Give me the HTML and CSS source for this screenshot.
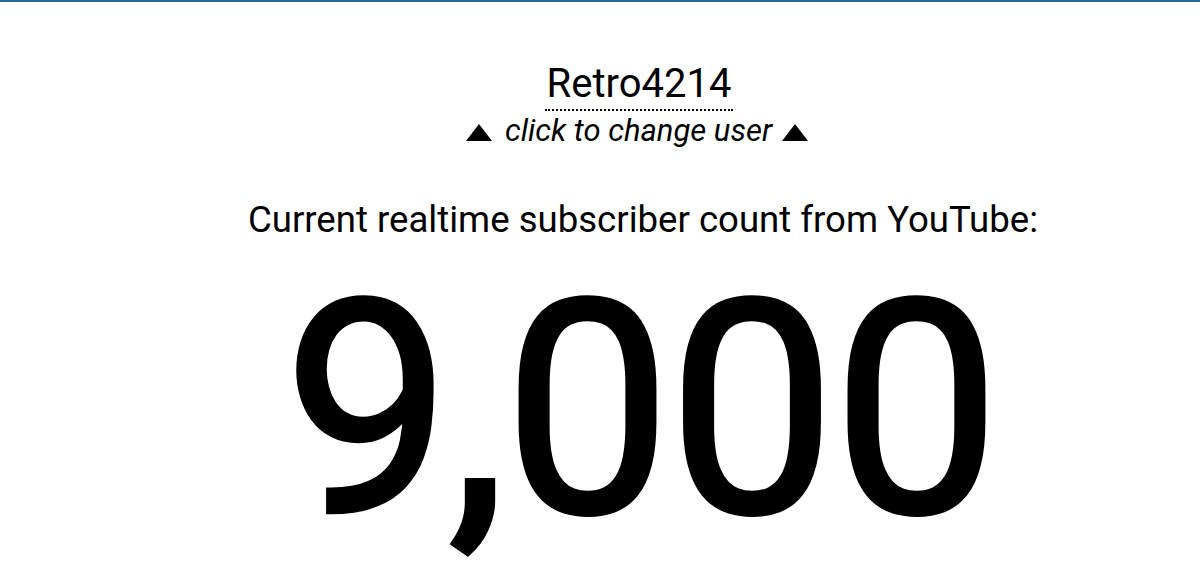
FILE: index.html
```html
<!DOCTYPE html>
<html lang="en">
<head>
  <meta charset="UTF-8">
  <meta name="viewport" content="width=device-width, initial-scale=1.0">
  <title>Realtime Subscriber Count</title>
  <link rel="stylesheet" href="styles.css">
</head>
<body>
  <div class="topbar"></div>
  <div class="container">
    <div class="user">
      <span class="username">Retro4214</span>
    </div>
    <p class="change-hint"><span class="arrow"></span>click to change user<span class="arrow right"></span></p>
    <p class="caption">Current realtime subscriber count from YouTube:</p>
    <div class="count">9,000</div>
  </div>
</body>
</html>
```

FILE: styles.css
```css
body {
  font-family: 'Roboto', 'Liberation Sans', sans-serif;
  background: #ffffff;
  color: #000000;
  margin: 0;
  overflow: hidden;
}

.topbar {
  height: 2px;
  background: #2b67a8;
}

.container {
  display: flex;
  flex-direction: column;
  align-items: center;
  padding-left: 78px;
  text-align: center;
}

.user {
  margin-top: 59px;
}

.username {
  display: inline-block;
  font-size: 40px;
  line-height: 46px;
  border-bottom: 2px dotted #000;
  padding: 0 2px 2px;
  cursor: pointer;
}

.change-hint {
  display: flex;
  align-items: baseline;
  font-size: 31px;
  font-style: italic;
  margin: 3px 4px 0 0;
  line-height: 34px;
}

.arrow {
  display: inline-block;
  width: 0;
  height: 0;
  border-left: 13px solid transparent;
  border-right: 13px solid transparent;
  border-bottom: 17px solid #000;
  margin: 0 13px 0 0;
}

.arrow.right {
  margin: 0 0 0 10px;
}

.caption {
  font-size: 36.6px;
  margin: 51px 0 0;
  padding-left: 8px;
  line-height: 42px;
}

.count {
  margin-top: 21px;
  font-size: 298px;
  font-weight: 400;
  line-height: 1;
  letter-spacing: -3px;
  padding-left: 3px;
  -webkit-text-stroke: 4px #000;
}
```
